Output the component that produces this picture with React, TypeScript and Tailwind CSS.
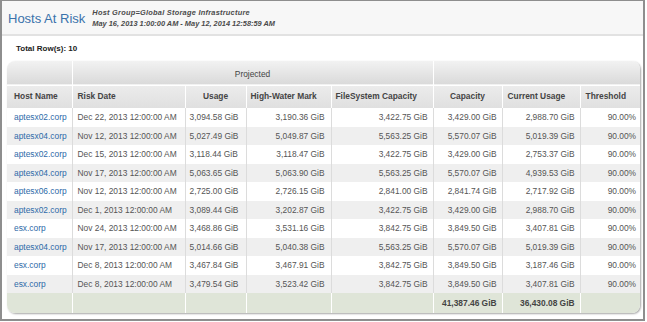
const rows = [
  { host: 'aptesx02.corp', date: 'Dec 22, 2013 12:00:00 AM', usage: '3,094.58 GiB', hwm: '3,190.36 GiB', fsc: '3,422.75 GiB', cap: '3,429.00 GiB', cur: '2,988.70 GiB', th: '90.00%' },
  { host: 'aptesx04.corp', date: 'Nov 12, 2013 12:00:00 AM', usage: '5,027.49 GiB', hwm: '5,049.87 GiB', fsc: '5,563.25 GiB', cap: '5,570.07 GiB', cur: '5,019.39 GiB', th: '90.00%' },
  { host: 'aptesx02.corp', date: 'Dec 15, 2013 12:00:00 AM', usage: '3,118.44 GiB', hwm: '3,118.47 GiB', fsc: '3,422.75 GiB', cap: '3,429.00 GiB', cur: '2,753.37 GiB', th: '90.00%' },
  { host: 'aptesx04.corp', date: 'Nov 17, 2013 12:00:00 AM', usage: '5,063.65 GiB', hwm: '5,063.90 GiB', fsc: '5,563.25 GiB', cap: '5,570.07 GiB', cur: '4,939.53 GiB', th: '90.00%' },
  { host: 'aptesx06.corp', date: 'Nov 12, 2013 12:00:00 AM', usage: '2,725.00 GiB', hwm: '2,726.15 GiB', fsc: '2,841.00 GiB', cap: '2,841.74 GiB', cur: '2,717.92 GiB', th: '90.00%' },
  { host: 'aptesx02.corp', date: 'Dec 1, 2013 12:00:00 AM', usage: '3,089.44 GiB', hwm: '3,202.87 GiB', fsc: '3,422.75 GiB', cap: '3,429.00 GiB', cur: '2,988.70 GiB', th: '90.00%' },
  { host: 'esx.corp', date: 'Nov 24, 2013 12:00:00 AM', usage: '3,468.86 GiB', hwm: '3,531.16 GiB', fsc: '3,842.75 GiB', cap: '3,849.50 GiB', cur: '3,407.81 GiB', th: '90.00%' },
  { host: 'aptesx04.corp', date: 'Nov 17, 2013 12:00:00 AM', usage: '5,014.66 GiB', hwm: '5,040.38 GiB', fsc: '5,563.25 GiB', cap: '5,570.07 GiB', cur: '5,019.39 GiB', th: '90.00%' },
  { host: 'esx.corp', date: 'Dec 8, 2013 12:00:00 AM', usage: '3,467.84 GiB', hwm: '3,467.91 GiB', fsc: '3,842.75 GiB', cap: '3,849.50 GiB', cur: '3,187.46 GiB', th: '90.00%' },
  { host: 'esx.corp', date: 'Dec 8, 2013 12:00:00 AM', usage: '3,479.54 GiB', hwm: '3,523.42 GiB', fsc: '3,842.75 GiB', cap: '3,849.50 GiB', cur: '3,407.81 GiB', th: '90.00%' },
];

const widths = [65, 113, 61, 85, 102, 69, 78, 60];

export default function App() {
  return (
    <div className="w-[647px] h-[322px] bg-white font-['Liberation_Sans',Arial,sans-serif]">
      <div className="w-[645px] h-[321px] border-l-2 border-r-2 border-t border-b-2 border-[#8e8e8e] flex flex-col">
        <div className="h-[35px] shrink-0 bg-[#f7f7f7] border-b-2 border-[#e2e2e2] flex items-center pl-[6px]">
          <h1 className="text-[13px] leading-none text-[#3a72ab] mt-[2px]">Hosts At Risk</h1>
          <div className="ml-[7px] italic font-bold text-[7.4px] leading-[11px] text-[#4a4a4a]">
            <div className="tracking-[0.25px]">Host Group=Global Storage Infrastructure</div>
            <div>May 16, 2013 1:00:00 AM - May 12, 2014 12:58:59 AM</div>
          </div>
        </div>
        <div className="h-[25px] shrink-0 pl-[14px] pt-[8px] text-[8px] leading-[10px] font-bold text-[#222]">
          Total Row(s): 10
        </div>
        <div className="ml-[5px] w-[633px] rounded-[8px] overflow-hidden shadow-[1px_1px_2px_rgba(0,0,0,0.35)]">
          <table className="table-fixed border-collapse w-[633px] text-[8.4px] text-[#555]">
            <colgroup>
              {widths.map((w, i) => (
                <col key={i} style={{ width: w }} />
              ))}
            </colgroup>
            <thead>
              <tr className="h-[24px] bg-gradient-to-b from-[#f2f2f2] to-[#dadada] border-b border-white">
                <th className="border-r border-white"></th>
                <th colSpan={4} className="border-r border-white text-center font-normal text-[#444] pt-[3px]">
                  Projected
                </th>
                <th colSpan={3}></th>
              </tr>
              <tr className="h-[23px] bg-gradient-to-b from-[#ececec] to-[#e0e0e0] font-bold text-[#444]">
                <th className="border-r border-white text-left pl-[7px]">Host Name</th>
                <th className="border-r border-white text-left pl-[5px]">Risk Date</th>
                <th className="border-r border-white text-center">Usage</th>
                <th className="border-r border-white text-left pl-[4px]">High-Water Mark</th>
                <th className="border-r border-white text-left pl-[4px]">FileSystem Capacity</th>
                <th className="border-r border-white text-center">Capacity</th>
                <th className="border-r border-white text-left pl-[5px]">Current Usage</th>
                <th className="text-left pl-[5px]">Threshold</th>
              </tr>
            </thead>
            <tbody>
              {rows.map((r, i) => (
                <tr key={i} className={i % 2 === 0 ? 'h-[19px] bg-white' : 'h-[18px] bg-[#efefef]'}>
                  <td className="border-r border-[#dcdcdc] pl-[7px] text-[#2e6aa8]">{r.host}</td>
                  <td className="border-r border-[#dcdcdc] pl-[5px]">{r.date}</td>
                  <td className="border-r border-[#dcdcdc] pl-[4px]">{r.usage}</td>
                  <td className="border-r border-[#dcdcdc] text-right pr-[6px]">{r.hwm}</td>
                  <td className="border-r border-[#dcdcdc] text-right pr-[5px]">{r.fsc}</td>
                  <td className="border-r border-[#dcdcdc] text-right pr-[5px]">{r.cap}</td>
                  <td className="border-r border-[#dcdcdc] text-right pr-[5px]">{r.cur}</td>
                  <td className="text-right pr-[4px]">{r.th}</td>
                </tr>
              ))}
            </tbody>
            <tfoot>
              <tr className="h-[20px] bg-[#dfe5d8] font-bold text-[#444]">
                <td className="border-r border-white"></td>
                <td className="border-r border-white"></td>
                <td className="border-r border-white"></td>
                <td className="border-r border-white"></td>
                <td className="border-r border-white"></td>
                <td className="border-r border-white text-right pr-[5px]">41,387.46 GiB</td>
                <td className="border-r border-white text-right pr-[5px]">36,430.08 GiB</td>
                <td></td>
              </tr>
            </tfoot>
          </table>
        </div>
      </div>
    </div>
  );
}
